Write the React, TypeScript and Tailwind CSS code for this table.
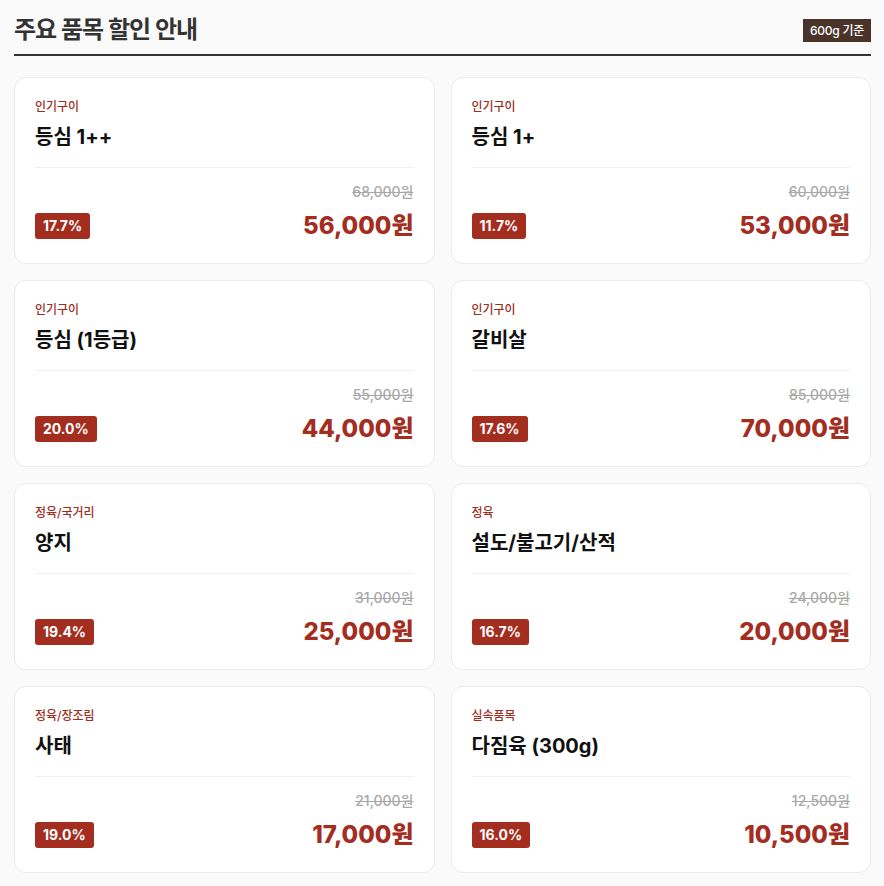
import React from 'react';

interface Item {
  category: string;
  name: string;
  original: string;
  price: string;
  rate: string;
}

const items: Item[] = [
  { category: '인기구이', name: '등심 1++', original: '68,000원', price: '56,000원', rate: '17.7%' },
  { category: '인기구이', name: '등심 1+', original: '60,000원', price: '53,000원', rate: '11.7%' },
  { category: '인기구이', name: '등심 (1등급)', original: '55,000원', price: '44,000원', rate: '20.0%' },
  { category: '인기구이', name: '갈비살', original: '85,000원', price: '70,000원', rate: '17.6%' },
  { category: '정육/국거리', name: '양지', original: '31,000원', price: '25,000원', rate: '19.4%' },
  { category: '정육', name: '설도/불고기/산적', original: '24,000원', price: '20,000원', rate: '16.7%' },
  { category: '정육/장조림', name: '사태', original: '21,000원', price: '17,000원', rate: '19.0%' },
  { category: '실속품목', name: '다짐육 (300g)', original: '12,500원', price: '10,500원', rate: '16.0%' },
];

const PriceCard: React.FC<{ item: Item }> = ({ item }) => (
  <div className="rounded-xl border border-[#ebebeb] bg-white px-5 pt-[21px] pb-[21px]">
    <div className="border-b border-[#f0f0f0] pb-4">
      <p className="text-xs leading-4 font-medium text-[#9e2f1f]">{item.category}</p>
      <h3 className="mt-2 text-xl leading-7 font-bold text-[#111]">{item.name}</h3>
    </div>
    <p className="mt-[14px] text-right text-sm leading-5 font-medium text-[#a8a8a8] line-through">
      {item.original}
    </p>
    <div className="mt-[8px] flex items-center justify-between">
      <span className="rounded-[3px] bg-[#a32d1f] px-2 py-[3px] text-sm leading-5 font-bold text-white">
        {item.rate}
      </span>
      <span className="text-2xl leading-8 font-extrabold text-[#a32d1f]">{item.price}</span>
    </div>
  </div>
);

export default function App() {
  return (
    <div
      className="min-h-screen bg-[#fafafa] pl-[14px] pr-[13px] pt-[14px] pb-4"
      style={{ fontFamily: 'Inter, "Noto Sans CJK KR", sans-serif' }}
    >
      <div className="flex items-center justify-between border-b-2 border-[#333] pb-[8px]">
        <h1 className="text-2xl leading-8 font-bold tracking-[-0.04em] text-[#333]">
          주요 품목 할인 안내
        </h1>
        <span className="bg-[#4a3429] px-[7px] py-[3px] text-xs leading-[17px] font-medium tracking-[-0.02em] text-white">
          600g 기준
        </span>
      </div>
      <div className="mt-[21px] grid grid-cols-2 gap-4">
        {items.map((item) => (
          <PriceCard key={item.name} item={item} />
        ))}
      </div>
    </div>
  );
}
